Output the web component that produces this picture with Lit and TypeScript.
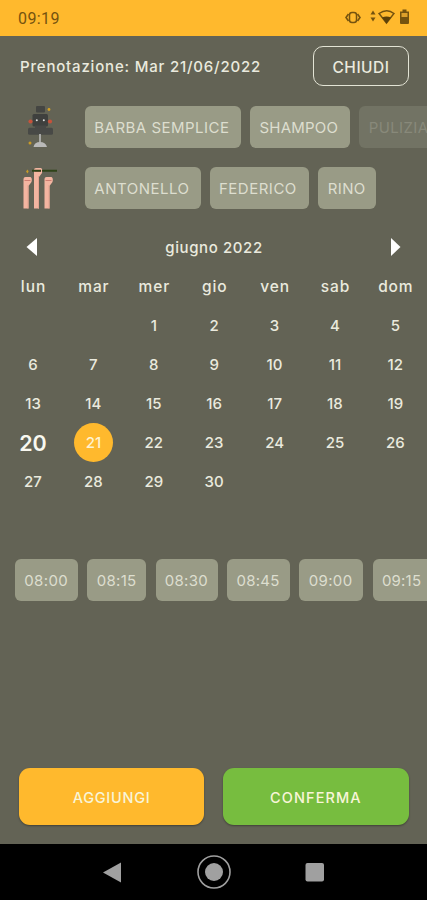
import { LitElement, html, css, svg } from "lit";
import { customElement, property, state } from "lit/decorators.js";
import { classMap } from "lit/directives/class-map.js";
import { styleMap } from "lit/directives/style-map.js";

interface Chip { label: string; width: number; spacing: number; off?: boolean; }

const SERVICES: Chip[] = [
  { label: "BARBA SEMPLICE", width: 156, spacing: 0.48 },
  { label: "SHAMPOO", width: 100, spacing: 0.2 },
  { label: "PULIZIA", width: 84, spacing: 0.4, off: true },
];
const STAFF: Chip[] = [
  { label: "ANTONELLO", width: 115.5, spacing: 0.5 },
  { label: "FEDERICO", width: 99.5, spacing: 0.5 },
  { label: "RINO", width: 58, spacing: 0.4 },
];
const TIMES: Chip[] = [
  { label: "08:00", width: 63.2, spacing: 0.35 },
  { label: "08:15", width: 59, spacing: 0.3 },
  { label: "08:30", width: 62.5, spacing: 0.25 },
  { label: "08:45", width: 63, spacing: 0.25 },
  { label: "09:00", width: 64, spacing: 0.35 },
  { label: "09:15", width: 60, spacing: 0.2 },
];
const WEEKDAYS = ["lun", "mar", "mer", "gio", "ven", "sab", "dom"];

@customElement("chip-row")
class ChipRow extends LitElement {
  @property({ attribute: false }) chips: Chip[] = [];
  static styles = css`
    :host { display: flex; gap: 9.2px; overflow: hidden; }
    .chip {
      flex: none; box-sizing: border-box; height: 42px; border-radius: 6px;
      background: #999b86; color: #dddecf; display: flex; align-items: center;
      padding: 1px 0 0 9.3px; font-size: 15px; font-weight: 400; white-space: nowrap;
    }
    .off { background: #727364; color: #88897a; }
  `;
  render() {
    return this.chips.map((c) => html`<div class=${classMap({ chip: true, off: !!c.off })}
      style=${styleMap({ width: c.width + "px", letterSpacing: c.spacing + "px" })}>${c.label}</div>`);
  }
}

@customElement("app-root")
export class AppRoot extends LitElement {
  @state() selected = 21;

  static styles = css`
    :host {
      display: flex; flex-direction: column; height: 900px; width: 427px; overflow: hidden;
      background: #636355; color: #eaeade; font-family: Inter, "Liberation Sans", sans-serif;
      font-size: 15px; font-weight: 500;
    }
    svg { display: block; flex: none; }
    .status {
      height: 35.5px; flex: none; box-sizing: border-box; background: #ffb92d; color: #75530f;
      display: flex; align-items: center; justify-content: space-between; padding: 1px 16px 0 18px;
      font: 400 16px Roboto, sans-serif; letter-spacing: .4px;
    }
    .header { display: flex; align-items: center; justify-content: space-between; height: 40px; padding: 10.5px 18px 0 20px; }
    .title { letter-spacing: .81px; padding-top: 1px; white-space: nowrap; }
    .close {
      box-sizing: border-box; width: 96px; height: 40px; border: 1.6px solid #e3e4d5; border-radius: 10px;
      display: flex; align-items: center; justify-content: center; padding-top: 2px; font-size: 15.5px; letter-spacing: .5px;
    }
    .pick { display: grid; grid-template-columns: 85px 1fr; align-items: center; height: 42px; }
    .services { margin-top: 19px; }
    .staff { margin-top: 18.5px; }
    .month { display: flex; align-items: center; justify-content: space-between; height: 40px; padding: 0 26px; margin-top: 19px; }
    .name { letter-spacing: .6px; padding: 1px 0 0 1px; }
    .grid { display: grid; grid-template-columns: repeat(7, 60.4px); grid-template-rows: 39.5px; grid-auto-rows: 39px; padding-left: 2.8px; }
    .cell { display: flex; align-items: center; justify-content: center; }
    .wd { font-size: 15.5px; letter-spacing: .9px; padding-left: 1px; }
    .today { font-size: 21.5px; font-weight: 600; color: #f8f8f0; }
    .dot { width: 39px; height: 39px; border-radius: 50%; background: #ffb92d; color: #fff3cf; display: flex; align-items: center; justify-content: center; }
    .times { padding-left: 15px; margin-top: 57.5px; }
    .actions { display: flex; gap: 19px; padding: 0 18.5px 0 19px; margin-top: auto; margin-bottom: 19px; }
    .btn {
      flex: 1; height: 57px; border-radius: 11px; display: flex; align-items: center; justify-content: center;
      box-shadow: 0 1px 2px rgba(0,0,0,.35); box-sizing: border-box; color: #f8f5d8; padding-top: 1px;
    }
    .add { background: #ffb92d; font-size: 14.5px; letter-spacing: .75px; }
    .ok { background: #77bd3f; font-size: 14.5px; letter-spacing: 1.1px; }
    .nav { height: 56px; flex: none; background: #000; display: flex; align-items: center; justify-content: center; }
  `;

  private day(n: number) {
    if (n < 1) return html`<div class="cell"></div>`;
    return html`<div class=${classMap({ cell: true, today: n === 20 })}>
      ${n === this.selected ? html`<div class="dot">${n}</div>` : n}</div>`;
  }

  private arm(x: number, y: number) {
    return svg`<path d="M${x} 42.500V${y + 2}q0-2 2-2h5q2 1 1 5l-3 4V42.500z" fill="#f3b5a1"/>
      <path d="M${x + 4.5} 42.500V${y + 8}" stroke="#e5a391" stroke-width="1"/>
      <path d="M${x + 1} ${y + 3.500}h6" stroke="#cf7d71" stroke-width="1"/>`;
  }

  render() {
    return html`
      <div class="status">
        <span>09:19</span>
        <svg width="67" height="20" viewBox="0 0 67 20" fill="none" stroke="#75530f">
          <rect x="5.500" y="4.500" width="7" height="10" rx="2.5" stroke-width="1.5"/>
          <path d="M4.500 6L2 9.500l2.500 3.500M13.500 6L16 9.500l-2.500 3.500" stroke-width="1.600"/>
          <path d="M29 2.500l2.500 4h-5zM29 13.500l2.500-4h-5z" fill="#75530f" stroke="none"/>
          <path d="M35 5.500q8-5.500 15 0L42.500 15z" stroke-width="1.500"/>
          <path d="M38 9.500q4.500-2.200 9 0l-4.500 6z" fill="#5d4108" stroke="none"/>
          <path d="M56 3.500h2.500v-2h4v2H65V15q0 1-1 1h-7q-1 0-1-1z" fill="#75530f" stroke="none"/>
          <path d="M57.500 5h6v4h-6z" fill="#dda02b" stroke="none"/>
        </svg>
      </div>
      <div class="header"><span class="title">Prenotazione: Mar 21/06/2022</span><div class="close">CHIUDI</div></div>
      <div class="pick services">
        <svg width="60" height="44" viewBox="0 0 60 44">
          <rect x="36" y="1" width="9" height="6.500" rx="1" fill="#444542"/>
          <rect x="32.500" y="9" width="15.500" height="12.500" rx="1.500" fill="#3f403e"/>
          <rect x="28" y="22.800" width="25" height="7" rx="1.500" fill="#484946"/>
          <path d="M35 20.500h11v3H35z" fill="#484946"/>
          <circle cx="30.500" cy="16.500" r="2.100" fill="#c6523b"/><circle cx="50" cy="16.500" r="2.100" fill="#c6523b"/>
          <circle cx="36.800" cy="15.300" r="1" fill="#ddd"/><circle cx="43.800" cy="15.300" r="1" fill="#ddd"/>
          <circle cx="49" cy="4.500" r="1.400" fill="#d3a126"/><circle cx="30" cy="38" r="1.500" fill="#c99b27"/>
          <path d="M40 29v9" stroke="#b5b5b4" stroke-width="1.700"/>
          <path d="M33.500 42q1-5 6.500-5t7 5z" fill="#b9b9b8"/>
        </svg>
        <chip-row .chips=${SERVICES}></chip-row>
      </div>
      <div class="pick staff">
        <svg width="60" height="44" viewBox="0 0 60 44">
          ${this.arm(23.5, 11)}${this.arm(34, 2)}${this.arm(44.5, 11)}
          <path d="M32 4.700h9M42 4.700h15" stroke="#2f4318" stroke-width="1.900"/>
          <path d="M26 5.500l1.500-2 1.200 2-1.200 2z" fill="#c59a27"/>
        </svg>
        <chip-row .chips=${STAFF}></chip-row>
      </div>
      <div class="month">
        <svg width="12" height="18" viewBox="0 0 12 18"><path d="M11 0v18L.5 9z" fill="#fff"/></svg>
        <span class="name">giugno 2022</span>
        <svg width="12" height="18" viewBox="0 0 12 18"><path d="M2 0v18l9.500-9z" fill="#fff"/></svg>
      </div>
      <div class="grid">
        ${WEEKDAYS.map((w) => html`<div class="cell wd">${w}</div>`)}
        ${Array.from({ length: 35 }, (_, i) => i - 1).filter((n) => n <= 30).map((n) => this.day(n))}
      </div>
      <chip-row class="times" .chips=${TIMES}></chip-row>
      <div class="actions"><div class="btn add">AGGIUNGI</div><div class="btn ok">CONFERMA</div></div>
      <div class="nav">
        <svg width="427" height="56" viewBox="0 0 427 56">
          <path d="M103 28.500L121 18.500v20z" fill="#a0a0a0"/>
          <circle cx="214" cy="28" r="16" fill="none" stroke="#a0a0a0" stroke-width="1.600"/>
          <circle cx="214" cy="28" r="9" fill="#a0a0a0"/>
          <rect x="305.500" y="19" width="18.500" height="18.500" rx="2" fill="#a0a0a0"/>
        </svg>
      </div>`;
  }
}
